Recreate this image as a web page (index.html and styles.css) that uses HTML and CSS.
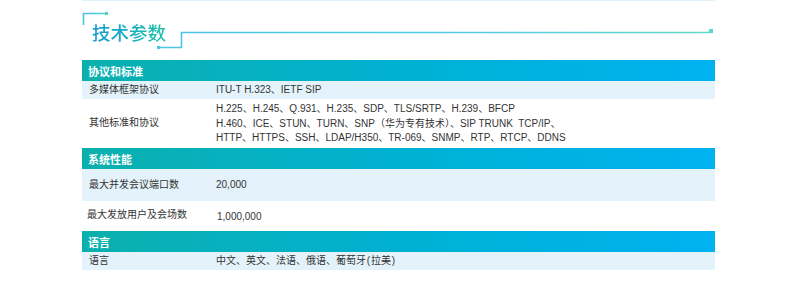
FILE: index.html
```html
<!DOCTYPE html>
<html lang="zh-CN">
<head>
<meta charset="utf-8">
<title>技术参数</title>
<link rel="stylesheet" href="styles.css">
</head>
<body>
<div class="page">
  <div class="topline"></div>
  <div class="title-area">
    <svg class="deco" width="633" height="59" viewBox="0 0 633 59" aria-hidden="true">
      <defs>
        <linearGradient id="g1" gradientUnits="userSpaceOnUse" x1="0" y1="0" x2="633" y2="0">
          <stop offset="0" stop-color="#4cc2ea"/>
          <stop offset="0.6" stop-color="#52cbe2"/>
          <stop offset="1" stop-color="#63d6c6"/>
        </linearGradient>
        <linearGradient id="g2" gradientUnits="userSpaceOnUse" x1="0" y1="0" x2="26" y2="0">
          <stop offset="0" stop-color="#4cc0ec"/>
          <stop offset="1" stop-color="#55d0c4"/>
        </linearGradient>
      </defs>
      <path d="M1.5 24 V12.5 H24" fill="none" stroke="url(#g2)" stroke-width="1.6"/>
      <rect x="23" y="11" width="3" height="3" fill="#52cfbf"/>
      <path d="M77 46.5 H99.5 V31.5 H629" fill="none" stroke="url(#g1)" stroke-width="1.6"/>
      <rect x="75" y="45" width="3" height="3" fill="#4bc4e8"/>
      <rect x="627" y="28" width="4" height="4" fill="#5fd6c6"/>
    </svg>
    <h2 class="title">技术参数</h2>
  </div>
  <div class="spec">
    <div class="sec-head">协议和标准</div>
    <div class="row alt h18">
      <div class="k">多媒体框架协议</div>
      <div class="v">ITU-T H.323、IETF SIP</div>
    </div>
    <div class="row h49">
      <div class="k">其他标准和协议</div>
      <div class="v multi">H.225、H.245、Q.931、H.235、SDP、TLS/SRTP、H.239、BFCP<br>H.460、ICE、STUN、TURN、SNP（华为专有技术）、SIP TRUNK&nbsp; TCP/IP、<br>HTTP、HTTPS、SSH、LDAP/H350、TR-069、SNMP、RTP、RTCP、DDNS</div>
    </div>
    <div class="sec-head">系统性能</div>
    <div class="row alt h32">
      <div class="k">最大并发会议端口数</div>
      <div class="v">20,000</div>
    </div>
    <div class="row h30">
      <div class="k shift">最大发放用户及会场数</div>
      <div class="v low">1,000,000</div>
    </div>
    <div class="sec-head">语言</div>
    <div class="row alt h18">
      <div class="k">语言</div>
      <div class="v">中文、英文、法语、俄语、葡萄牙&#8202;(&#8202;拉美&#8202;)</div>
    </div>
  </div>
</div>
</body>
</html>
```

FILE: styles.css
```css
html, body {
  margin: 0;
  padding: 0;
  background: #ffffff;
}

body {
  font-family: "Liberation Sans", "Noto Sans CJK SC", sans-serif;
  color: #333333;
}

.page {
  width: 633px;
  margin-left: 82px;
}

.topline {
  height: 1px;
  background: #e2f1fa;
}

.title-area {
  position: relative;
  height: 59px;
  box-sizing: border-box;
  padding: 21px 0 0 10px;
}

.deco {
  position: absolute;
  left: 0;
  top: 0;
  display: block;
}

.title {
  position: relative;
  margin: 0;
  font-family: "Noto Sans CJK SC", sans-serif;
  font-size: 18.5px;
  line-height: 20px;
  font-weight: 500;
  letter-spacing: 0;
  background: linear-gradient(90deg, #179bd2 0%, #15b0bd 60%, #22c2a8 100%);
  -webkit-background-clip: text;
  background-clip: text;
  color: transparent;
  display: inline-block;
}

.spec {
  display: flex;
  flex-direction: column;
}

.sec-head {
  height: 21px;
  display: flex;
  align-items: center;
  padding-left: 6px;
  background: linear-gradient(90deg, #0bb0ad 0%, #00b1d6 55%, #00b2f0 100%);
  color: #ffffff;
  font-size: 11px;
  font-weight: bold;
}

.row {
  display: grid;
  grid-template-columns: 134px 1fr;
  align-items: center;
  font-size: 10px;
  line-height: 14.5px;
  background: #ffffff;
}

.row.alt {
  background: #e4f3fb;
}

.h18 { height: 18px; }
.h49 { height: 49px; }
.h32 { height: 32px; }
.h30 { height: 30px; }

.k {
  padding-left: 7px;
}

.k.shift {
  padding-left: 5px;
  position: relative;
  top: -1px;
}

.v {
  color: #333333;
}

.v.multi {
  padding-top: 1px;
}

.v.low {
  padding-left: 1px;
  position: relative;
  top: 1px;
}
```
